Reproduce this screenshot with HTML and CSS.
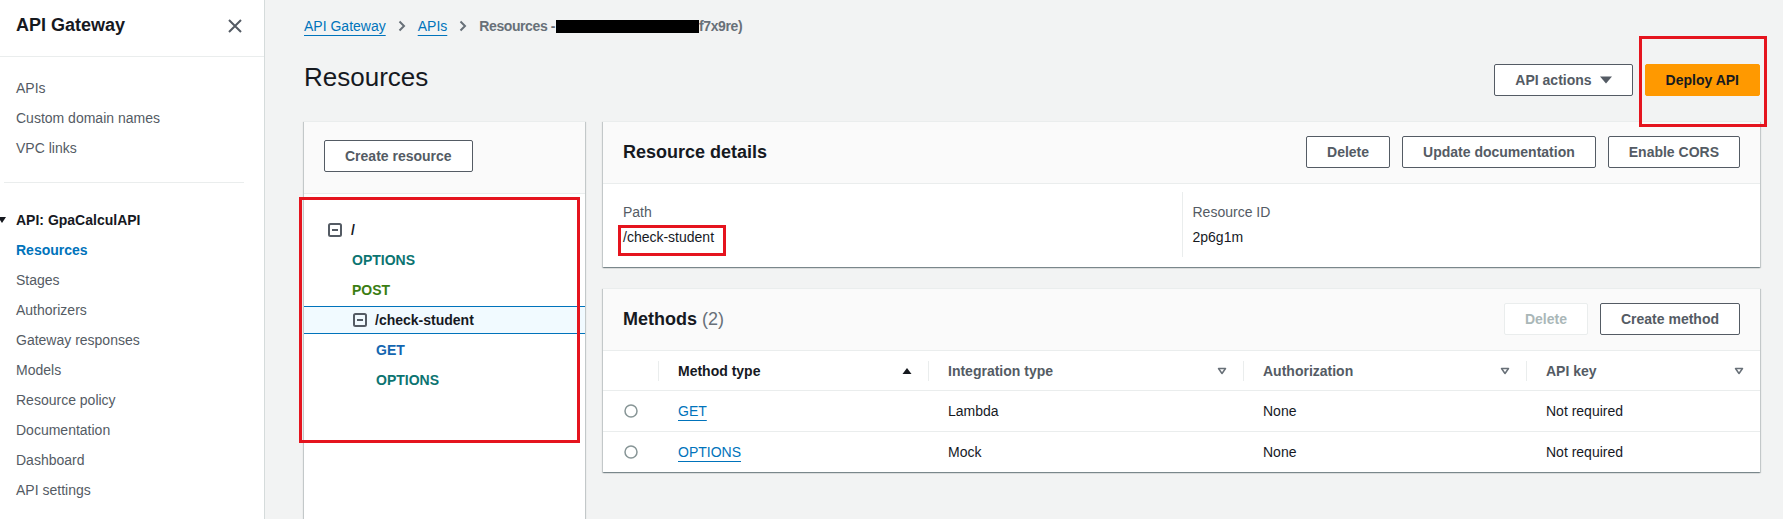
FILE: index.html
```html
<!DOCTYPE html>
<html lang="en">
<head>
<meta charset="utf-8">
<title>Resources - API Gateway</title>
<link rel="stylesheet" href="styles.css">
</head>
<body>
<div class="app">
  <aside class="sidebar">
    <div class="side-head">
      <span class="side-title">API Gateway</span>
      <svg class="close" width="14" height="14" viewBox="0 0 14 14"><path d="M1 1L13 13M13 1L1 13" stroke="#545b64" stroke-width="2" fill="none"/></svg>
    </div>
    <ul class="nav first">
      <li>APIs</li>
      <li>Custom domain names</li>
      <li>VPC links</li>
    </ul>
    <hr class="side-div">
    <div class="nav-section">
      <svg class="sec-caret" width="8" height="6" viewBox="0 0 8 6"><path d="M0 0H8L4 6Z" fill="#16191f"/></svg>
      <span>API: GpaCalculAPI</span>
    </div>
    <ul class="nav">
      <li class="active">Resources</li>
      <li>Stages</li>
      <li>Authorizers</li>
      <li>Gateway responses</li>
      <li>Models</li>
      <li>Resource policy</li>
      <li>Documentation</li>
      <li>Dashboard</li>
      <li>API settings</li>
    </ul>
  </aside>

  <main class="main">
    <nav class="crumbs">
      <a class="crumb-link">API Gateway</a>
      <svg width="8" height="12" viewBox="0 0 8 12"><path d="M1.5 1.5L6 6L1.5 10.5" stroke="#687078" stroke-width="2" fill="none"/></svg>
      <a class="crumb-link">APIs</a>
      <svg width="8" height="12" viewBox="0 0 8 12"><path d="M1.5 1.5L6 6L1.5 10.5" stroke="#687078" stroke-width="2" fill="none"/></svg>
      <span class="crumb-current">Resources -<span class="redact"></span>f7x9re)</span>
    </nav>

    <div class="page-head">
      <h1>Resources</h1>
      <div class="actions">
        <button class="btn">API actions
          <svg width="12" height="8" viewBox="0 0 12 8"><path d="M0 0.5H12L6 7.5Z" fill="#545b64"/></svg>
        </button>
        <button class="btn btn-primary">Deploy API</button>
      </div>
    </div>

    <div class="content">
      <section class="tree-panel">
        <div class="tree-head">
          <button class="btn">Create resource</button>
        </div>
        <div class="tree">
          <div class="tree-row res lvl0">
            <svg width="14" height="14" viewBox="0 0 14 14"><rect x="1" y="1" width="12" height="12" rx="1.5" fill="none" stroke="#545b64" stroke-width="2"/><path d="M4 7H10" stroke="#545b64" stroke-width="2"/></svg>
            <span>/</span>
          </div>
          <div class="tree-row m-lvl0 m-options">OPTIONS</div>
          <div class="tree-row m-lvl0 m-post">POST</div>
          <div class="tree-row res lvl1 sel">
            <svg width="14" height="14" viewBox="0 0 14 14"><rect x="1" y="1" width="12" height="12" rx="1.5" fill="none" stroke="#545b64" stroke-width="2"/><path d="M4 7H10" stroke="#545b64" stroke-width="2"/></svg>
            <span>/check-student</span>
          </div>
          <div class="tree-row m-lvl1 m-get">GET</div>
          <div class="tree-row m-lvl1 m-options">OPTIONS</div>
        </div>
      </section>

      <div class="cards">
        <section class="card">
          <div class="card-head">
            <h2 class="card-title">Resource details</h2>
            <div class="actions">
              <button class="btn">Delete</button>
              <button class="btn">Update documentation</button>
              <button class="btn">Enable CORS</button>
            </div>
          </div>
          <div class="details">
            <div class="kv">
              <div class="kv-label">Path</div>
              <div class="kv-value">/check-student</div>
            </div>
            <div class="kv">
              <div class="kv-label">Resource ID</div>
              <div class="kv-value">2p6g1m</div>
            </div>
          </div>
        </section>

        <section class="card">
          <div class="card-head">
            <h2 class="card-title">Methods <span class="count">(2)</span></h2>
            <div class="actions">
              <button class="btn btn-disabled">Delete</button>
              <button class="btn">Create method</button>
            </div>
          </div>
          <div class="table">
            <div class="trow thead">
              <div class="th th-radio"></div>
              <div class="th sorted">Method type
                <svg width="10" height="8" viewBox="0 0 10 8"><path d="M0.5 7H9.5L5 1Z" fill="#16191f"/></svg>
              </div>
              <div class="th">Integration type
                <svg width="10" height="8" viewBox="0 0 10 8"><path d="M1.5 1.5H8.5L5 6.5Z" fill="none" stroke="#687078" stroke-width="1.5" stroke-linejoin="round"/></svg>
              </div>
              <div class="th">Authorization
                <svg width="10" height="8" viewBox="0 0 10 8"><path d="M1.5 1.5H8.5L5 6.5Z" fill="none" stroke="#687078" stroke-width="1.5" stroke-linejoin="round"/></svg>
              </div>
              <div class="th">API key
                <svg width="10" height="8" viewBox="0 0 10 8"><path d="M1.5 1.5H8.5L5 6.5Z" fill="none" stroke="#687078" stroke-width="1.5" stroke-linejoin="round"/></svg>
              </div>
            </div>
            <div class="trow">
              <div class="td td-radio"><svg width="14" height="14" viewBox="0 0 14 14"><circle cx="7" cy="7" r="6" fill="#fff" stroke="#879596" stroke-width="1.5"/></svg></div>
              <div class="td"><a class="tlink">GET</a></div>
              <div class="td">Lambda</div>
              <div class="td">None</div>
              <div class="td">Not required</div>
            </div>
            <div class="trow">
              <div class="td td-radio"><svg width="14" height="14" viewBox="0 0 14 14"><circle cx="7" cy="7" r="6" fill="#fff" stroke="#879596" stroke-width="1.5"/></svg></div>
              <div class="td"><a class="tlink">OPTIONS</a></div>
              <div class="td">Mock</div>
              <div class="td">None</div>
              <div class="td">Not required</div>
            </div>
          </div>
        </section>
      </div>
    </div>
  </main>
</div>

<div class="annot annot-deploy"></div>
<div class="annot annot-tree"></div>
<div class="annot annot-path"></div>
</body>
</html>
```

FILE: styles.css
```css
* { box-sizing: border-box; }

body {
  margin: 0;
  font-family: "Liberation Sans", Arial, sans-serif;
  font-size: 14px;
  color: #16191f;
  background: #f2f3f3;
  overflow: hidden;
}

.app {
  display: flex;
  height: 519px;
}

/* Sidebar */
.sidebar {
  width: 265px;
  flex: none;
  background: #fff;
  border-right: 1px solid #d5dbdb;
  overflow: hidden;
}

.side-head {
  height: 57px;
  padding: 14px 22px 0 16px;
  border-bottom: 1px solid #eaeded;
  display: flex;
  justify-content: space-between;
  align-items: flex-start;
}

.side-title {
  font-size: 18px;
  font-weight: bold;
  line-height: 22px;
  color: #16191f;
}

.close { margin-top: 5px; }

.nav {
  list-style: none;
  margin: 0;
  padding: 0 0 0 16px;
}

.nav.first { padding-top: 16px; }

.nav li {
  line-height: 30px;
  color: #545b64;
}

.nav li.active {
  color: #0073bb;
  font-weight: bold;
}

.side-div {
  margin: 19px 20px 0 4px;
  border: 0;
  border-top: 1px solid #eaeded;
  height: 0;
}

.nav-section {
  margin-top: 22px;
  height: 30px;
  display: flex;
  align-items: center;
  font-weight: bold;
  color: #16191f;
}

.sec-caret {
  margin-left: -2px;
  margin-right: 10px;
}

/* Main */
.main {
  flex: 1;
  min-width: 0;
  padding: 16px 23px 0 39px;
}

.crumbs {
  height: 20px;
  display: flex;
  align-items: center;
  gap: 12px;
  line-height: 20px;
}

.crumb-link {
  color: #0073bb;
  text-decoration: underline;
  text-underline-offset: 4px;
}

.crumb-current {
  color: #687078;
  font-weight: bold;
  letter-spacing: -0.4px;
  display: inline-flex;
  align-items: center;
}

.redact {
  display: inline-block;
  width: 143px;
  height: 13px;
  margin-left: 1px;
  background: #000;
}

.page-head {
  margin-top: 26px;
  height: 36px;
  display: flex;
  justify-content: space-between;
  align-items: center;
}

h1 {
  margin: 0;
  align-self: flex-start;
  font-size: 26px;
  font-weight: normal;
  line-height: 30px;
  color: #16191f;
}

.actions {
  display: flex;
  align-items: center;
  gap: 12px;
}

.btn {
  height: 32px;
  padding: 0 20px;
  border: 1px solid #545b64;
  border-radius: 2px;
  background: #fff;
  color: #545b64;
  font-family: inherit;
  font-size: 14px;
  font-weight: bold;
  display: inline-flex;
  align-items: center;
  gap: 8px;
}

.btn-primary {
  background: #ff9900;
  border-color: #ff9900;
  color: #16191f;
}

.btn-disabled {
  border-color: #eaeded;
  color: #aab7b8;
}

/* Content */
.content {
  margin-top: 23px;
  display: flex;
  gap: 18px;
  align-items: flex-start;
}

.tree-panel {
  width: 281px;
  flex: none;
  height: 420px;
  background: #fff;
  border-top: 1px solid #eaeded;
  box-shadow: 0 1px 1px 0 rgba(0, 28, 36, .3), 1px 1px 1px 0 rgba(0, 28, 36, .15), -1px 1px 1px 0 rgba(0, 28, 36, .15);
}

.tree-head {
  background: #fafafa;
  padding: 18px 20px 21px;
  border-bottom: 1px solid #eaeded;
}

.tree {
  padding-top: 21px;
}

.tree-row {
  height: 30px;
  display: flex;
  align-items: center;
  gap: 9px;
  font-weight: bold;
}

.tree-row.lvl0 { padding-left: 24px; }
.tree-row.lvl1 { padding-left: 49px; gap: 8px; }
.tree-row.m-lvl0 { padding-left: 48px; }
.tree-row.m-lvl1 { padding-left: 72px; }

.tree-row.sel {
  height: 28px;
  margin: 1px 0;
  background: #f1faff;
  border-top: 1px solid #0073bb;
  border-bottom: 1px solid #0073bb;
}

.m-options { color: #0c7471; }
.m-post { color: #3a7d12; }
.m-get { color: #1466b0; }

.cards {
  flex: 1;
  min-width: 0;
  display: flex;
  flex-direction: column;
  gap: 21px;
}

.card {
  background: #fff;
  border-top: 1px solid #eaeded;
  box-shadow: 0 1px 1px 0 rgba(0, 28, 36, .3), 1px 1px 1px 0 rgba(0, 28, 36, .15), -1px 1px 1px 0 rgba(0, 28, 36, .15);
}

.card-head {
  background: #fafafa;
  padding: 14px 20px 15px;
  display: flex;
  justify-content: space-between;
  align-items: center;
  border-bottom: 1px solid #eaeded;
}

.card-title {
  margin: 0;
  font-size: 18px;
  font-weight: bold;
  line-height: 22px;
  color: #16191f;
}

.count {
  font-weight: normal;
  color: #687078;
}

.details {
  padding: 8px 20px 10px;
  display: grid;
  grid-template-columns: 1fr 1fr;
}

.kv {
  padding: 10px 0;
}

.kv + .kv {
  border-left: 1px solid #eaeded;
  padding-left: 10px;
}

.kv-label {
  color: #545b64;
  line-height: 20px;
}

.kv-value {
  margin-top: 5px;
  line-height: 20px;
  color: #16191f;
}

/* Table */
.trow {
  display: grid;
  grid-template-columns: 55px 270px 315px 283px 1fr;
  height: 41px;
  border-bottom: 1px solid #eaeded;
}

.trow:last-child { border-bottom: 0; height: 40px; }

.thead { height: 40px; }

.th {
  position: relative;
  display: flex;
  align-items: center;
  justify-content: space-between;
  padding: 0 16px 0 20px;
  font-weight: bold;
  color: #545b64;
}

.th.sorted { color: #16191f; padding-right: 16px; }

.th + .th::before {
  content: "";
  position: absolute;
  left: 0;
  top: 10px;
  bottom: 9px;
  width: 1px;
  background: #eaeded;
}

.td {
  display: flex;
  align-items: center;
  padding-left: 20px;
  color: #16191f;
}

.td-radio {
  padding-left: 0;
  justify-content: center;
}

.tlink {
  color: #0073bb;
  text-decoration: underline;
  text-underline-offset: 4px;
}

/* Annotation boxes drawn over the screenshot */
.annot {
  position: absolute;
  border: 3px solid #e5141e;
}

.annot-deploy { left: 1639px; top: 36px; width: 128px; height: 91px; }
.annot-tree { left: 299px; top: 197px; width: 281px; height: 246px; }
.annot-path { left: 618px; top: 225px; width: 108px; height: 31px; }
```
